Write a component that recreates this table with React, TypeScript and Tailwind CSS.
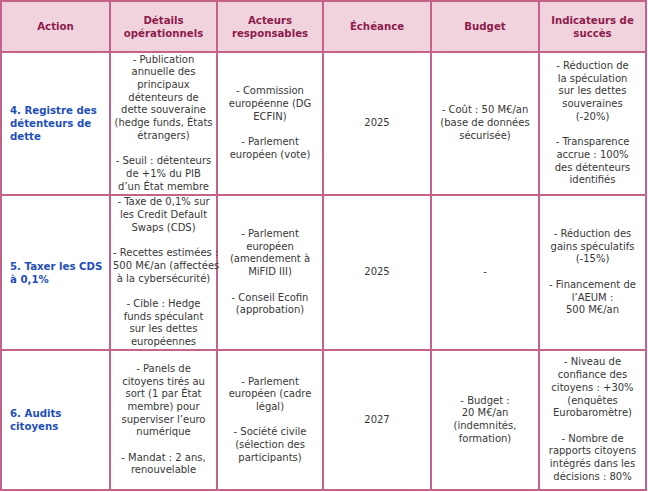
const headers = [
  ['Action'],
  ['Détails', 'opérationnels'],
  ['Acteurs', 'responsables'],
  ['Échéance'],
  ['Budget'],
  ['Indicateurs de', 'succès'],
]

type Cell = string[][]

const rows: { action: string[]; cells: Cell[]; h: string }[] = [
  {
    action: ['4. Registre des', 'détenteurs de', 'dette'],
    h: 'h-[143px]',
    cells: [
      [
        ['- Publication', 'annuelle des', 'principaux', 'détenteurs de', 'dette souveraine', '(hedge funds, États', 'étrangers)'],
        ['- Seuil : détenteurs', 'de +1% du PIB', 'd’un État membre'],
      ],
      [['- Commission', 'européenne (DG', 'ECFIN)'], ['- Parlement', 'européen (vote)']],
      [['2025']],
      [['- Coût : 50 M€/an', '(base de données', 'sécurisée)']],
      [
        ['- Réduction de', 'la spéculation', 'sur les dettes', 'souveraines', '(-20%)'],
        ['- Transparence', 'accrue : 100%', 'des détenteurs', 'identifiés'],
      ],
    ],
  },
  {
    action: ['5. Taxer les CDS', 'à 0,1%'],
    h: 'h-[155px]',
    cells: [
      [
        ['- Taxe de 0,1% sur', 'les Credit Default', 'Swaps (CDS)'],
        ['- Recettes estimées :', '500 M€/an (affectées', 'à la cybersécurité)'],
        ['- Cible : Hedge', 'funds spéculant', 'sur les dettes', 'européennes'],
      ],
      [['- Parlement', 'européen', '(amendement à', 'MiFID III)'], ['- Conseil Ecofin', '(approbation)']],
      [['2025']],
      [['-']],
      [['- Réduction des', 'gains spéculatifs', '(-15%)'], ['- Financement de', 'l’AEUM :', '500 M€/an']],
    ],
  },
  {
    action: ['6. Audits', 'citoyens'],
    h: 'h-[140px]',
    cells: [
      [
        ['- Panels de', 'citoyens tirés au', 'sort (1 par État', 'membre) pour', 'superviser l’euro', 'numérique'],
        ['- Mandat : 2 ans,', 'renouvelable'],
      ],
      [['- Parlement', 'européen (cadre', 'légal)'], ['- Société civile', '(sélection des', 'participants)']],
      [['2027']],
      [['- Budget :', '20 M€/an', '(indemnités,', 'formation)']],
      [
        ['- Niveau de', 'confiance des', 'citoyens : +30%', '(enquêtes', 'Eurobaromètre)'],
        ['- Nombre de', 'rapports citoyens', 'intégrés dans les', 'décisions : 80%'],
      ],
    ],
  },
]

const widths = ['w-[109px]', 'w-[107px]', 'w-[106px]', 'w-[108px]', 'w-[108px]', 'w-[107px]']

export default function App() {
  return (
    <div className="w-[648px] h-[492px] bg-white font-['DejaVu_Sans',Verdana,sans-serif] text-[10px] leading-[12.7px] text-[#383838]">
      <table className="w-[646px] table-fixed border-collapse border-2 border-[#c4628a]">
        <thead>
          <tr className="h-[51px] bg-[#f1d3de]">
            {headers.map((h, i) => (
              <th key={i} className={`${widths[i]} border-2 border-[#c4628a] px-1 text-center align-middle font-bold text-[#8c1c4c] text-[10.2px] leading-[13px]`}>
                {h.map((l, j) => (
                  <div key={j} className="whitespace-nowrap">{l}</div>
                ))}
              </th>
            ))}
          </tr>
        </thead>
        <tbody>
          {rows.map((r, i) => (
            <tr key={i} className={r.h}>
              <td className="border-2 border-[#c4628a] px-[8px] align-middle font-bold text-[#1f4fb8] text-[10.2px] leading-[13px]">
                {r.action.map((l, j) => (
                  <div key={j} className="whitespace-nowrap">{l}</div>
                ))}
              </td>
              {r.cells.map((c, j) => (
                <td key={j} className="border-2 border-[#c4628a] px-[2px] text-center align-middle">
                  <div className="flex flex-col gap-[12.7px]">
                    {c.map((p, k) => (
                      <div key={k}>
                        {p.map((l, m) => (
                          <div key={m} className="whitespace-nowrap">{l}</div>
                        ))}
                      </div>
                    ))}
                  </div>
                </td>
              ))}
            </tr>
          ))}
        </tbody>
      </table>
    </div>
  )
}
